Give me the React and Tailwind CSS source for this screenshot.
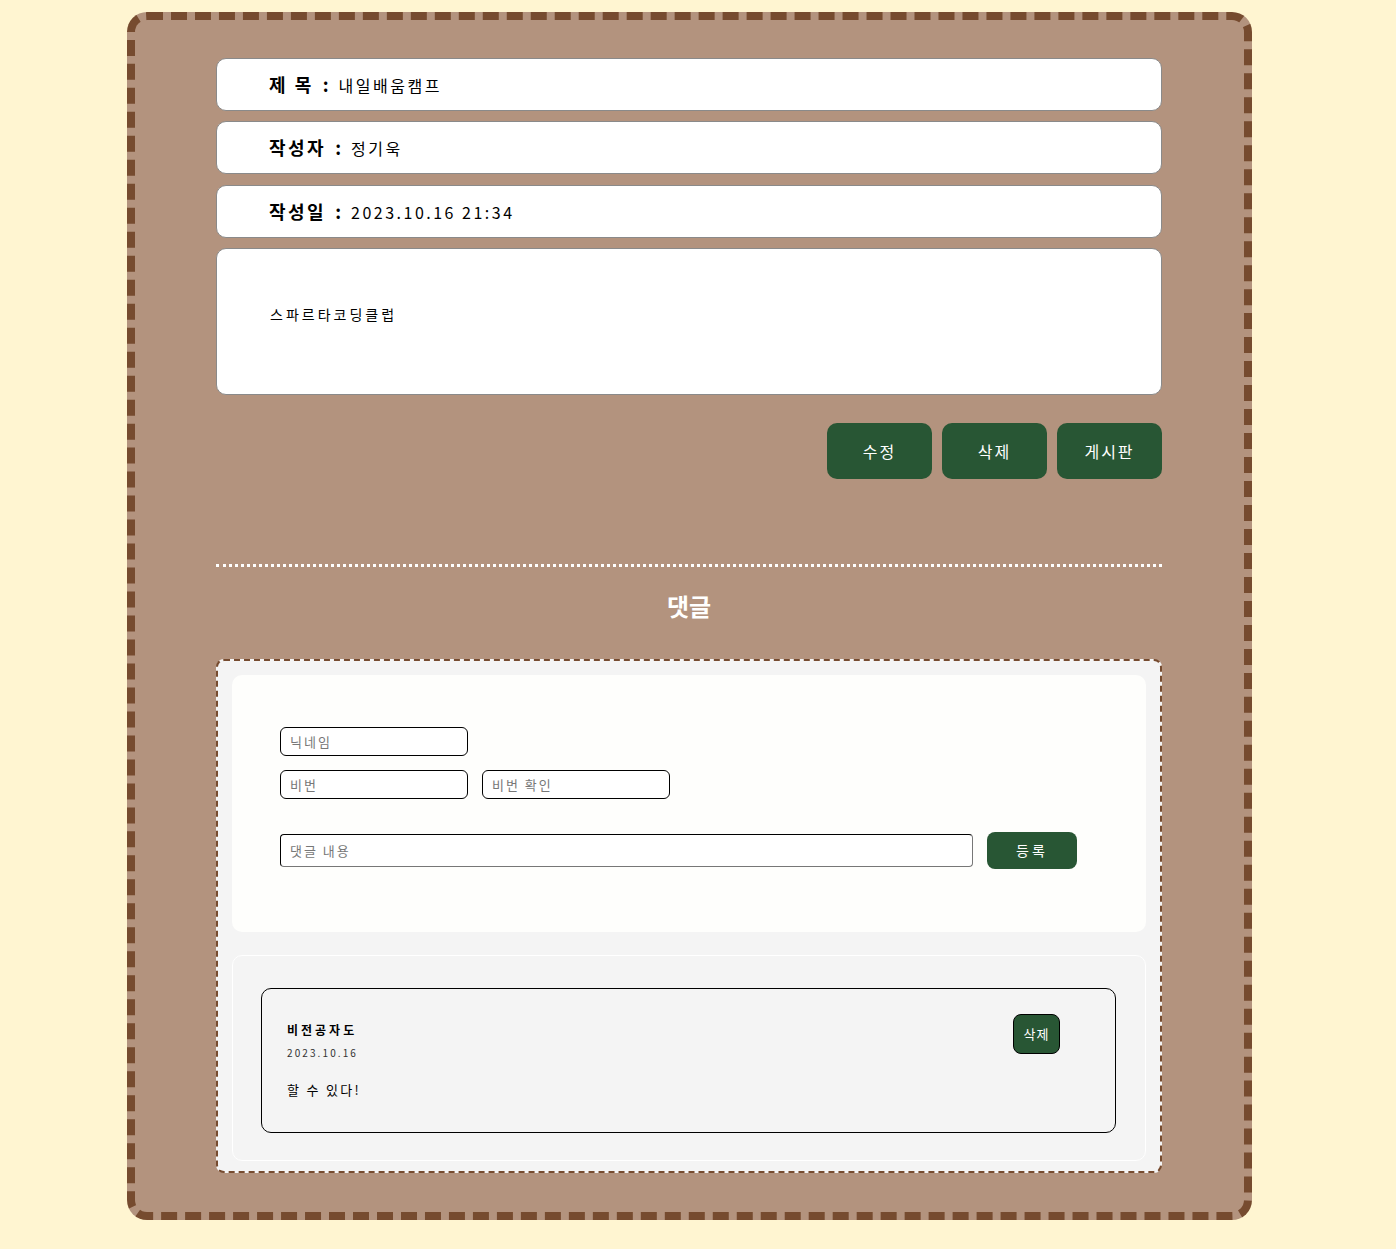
import React from "react";

const font = "font-['Noto_Sans_CJK_KR','Noto_Sans',sans-serif]";

function InfoRow({ label, value, className = "" }) {
  return (
    <div className={`h-[53px] bg-white border border-[#8a8a8a] rounded-[10px] flex items-center pl-[52px] ${className}`}>
      <span className="text-[18px] font-bold text-black whitespace-pre tracking-[2.5px]">{label}</span>
      <span className="text-[18px] font-bold text-black ml-[9px] mr-[10px]">:</span>
      <span className="text-[16px] text-black tracking-[2.5px]">{value}</span>
    </div>
  );
}

function GreenButton({ children }) {
  return (
    <button className="w-[105px] h-[56px] rounded-[10px] bg-[#285634] text-white text-[16px] tracking-[2px]">
      {children}
    </button>
  );
}

const inputCls =
  "h-[29px] border border-black rounded-[6px] px-[9px] text-[13px] tracking-[2px] bg-white placeholder:text-[#777]";

export default function App() {
  return (
    <div className={`min-h-screen bg-[#fff5d1] pt-3 pb-[29px] ${font}`}>
      <div className="ml-[127px] w-[1125px] rounded-[20px] border-8 border-dashed border-[#764b2f] bg-[#b3937e] pl-[81px] pr-[82px] pt-[38px] pb-[39px]">
        <div className="flex flex-col gap-[10px]">
          <InfoRow label="제 목" value="내일배움캠프" />
          <InfoRow label="작성자" value="정기욱" />
          <InfoRow label="작성일" value="2023.10.16 21:34" className="mt-[1px]" />
          <div className="h-[147px] bg-white border border-[#8a8a8a] rounded-[10px] flex items-center pl-[53px] pb-[14px]">
            <span className="text-[14px] text-black tracking-[3px]">스파르타코딩클럽</span>
          </div>
        </div>

        <div className="mt-[28px] flex justify-end gap-[10px]">
          <GreenButton>수정</GreenButton>
          <GreenButton>삭제</GreenButton>
          <GreenButton>게시판</GreenButton>
        </div>

        <div className="mt-[85px] border-t-[3px] border-dotted border-white" />
        <h2 className="mt-[23px] text-center text-white text-[24px] leading-[32px] font-bold">댓글</h2>

        <div className="mt-[37px] border-2 border-dashed border-[#764b2f] bg-[#f4f4f4] rounded-[8px] p-[14px] pb-[10px]">
          <div className="bg-[#fefefc] rounded-[10px] pl-[48px] pt-[52px] pb-[63px]">
            <div className="flex flex-col gap-[14px]">
              <input placeholder="닉네임" className={`w-[188px] ${inputCls}`} />
              <div className="flex gap-[14px]">
                <input type="password" placeholder="비번" className={`w-[188px] ${inputCls}`} />
                <input type="password" placeholder="비번 확인" className={`w-[188px] ${inputCls}`} />
              </div>
            </div>
            <div className="mt-[33px] flex items-center gap-[14px]">
              <input
                placeholder="댓글 내용"
                className="w-[693px] h-[33px] border border-black border-r-[#777] border-b-[#777] rounded-[4px] px-[9px] text-[13px] tracking-[2px] bg-white placeholder:text-[#777]"
              />
              <button className="w-[90px] h-[37px] rounded-[8px] bg-[#285634] text-white text-[14px] tracking-[3px]">
                등록
              </button>
            </div>
          </div>

          <div className="mt-[23px] border border-white bg-[#f4f4f4] rounded-[10px] pl-[28px] pr-[29px] pt-[32px] pb-[27px]">
            <div className="border border-black rounded-[10px] flex justify-between items-start">
              <div className="pl-[25px] pt-[32px] pb-[32px]">
                <div className="text-[12px] leading-[18px] font-bold text-black tracking-[3px]">비전공자도</div>
                <div className="mt-[6px] text-[10px] leading-[15px] text-[#333] tracking-[2.1px]">2023.10.16</div>
                <div className="mt-[20px] text-[13px] leading-[20px] text-black tracking-[2.3px]">할 수 있다!</div>
              </div>
              <button className="mt-[25px] mr-[55px] w-[47px] h-[40px] rounded-[8px] bg-[#285634] border border-black text-white text-[13px] tracking-[1px]">
                삭제
              </button>
            </div>
          </div>
        </div>
      </div>
    </div>
  );
}
